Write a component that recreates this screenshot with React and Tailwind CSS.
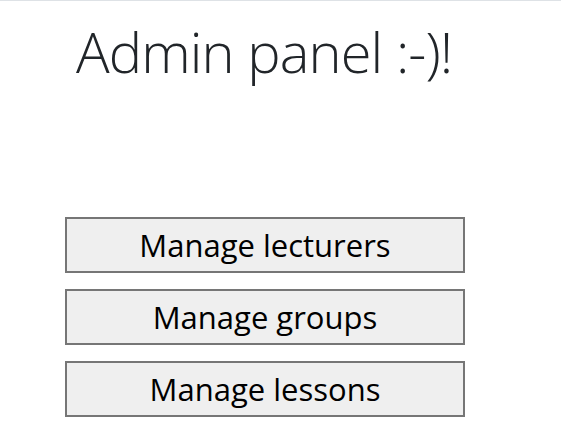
export default function App() {
  const items = ["Manage lecturers", "Manage groups", "Manage lessons"];
  return (
    <div
      className="w-[561px] h-[438px] bg-white border-t border-[#dee2e6] overflow-hidden"
      style={{ fontFamily: '"Open Sans", "Noto Sans", sans-serif' }}
    >
      <h1 className="pl-[76px] pt-[17px] text-[56px] font-light leading-[1.2] tracking-[-0.9px] text-[#212529]">
        Admin panel :-)!
      </h1>
      <div className="flex flex-col gap-4 pl-[65px] pt-[132px]">
        {items.map((t) => (
          <button
            key={t}
            className="w-[400px] h-[56px] bg-[#efefef] border-2 border-[#767676] text-[31px] text-black"
          >
            {t}
          </button>
        ))}
      </div>
    </div>
  );
}
